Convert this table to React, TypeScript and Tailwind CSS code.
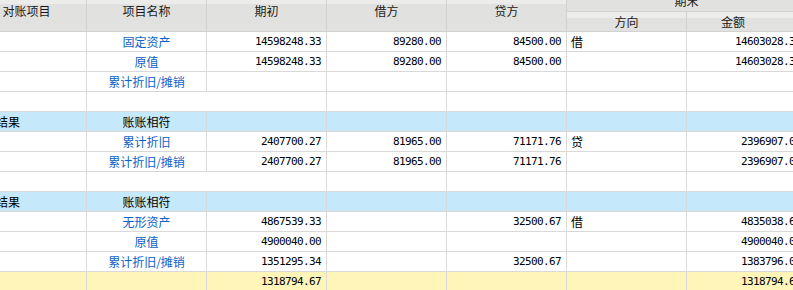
type Row =
  | { kind: 'data'; name: string; a?: string; b?: string; c?: string; dir?: string; end?: string }
  | { kind: 'empty' }
  | { kind: 'group'; label: string; note: string }
  | { kind: 'total'; a: string; end: string };

const rows: Row[] = [
  { kind: 'data', name: '固定资产', a: '14598248.33', b: '89280.00', c: '84500.00', dir: '借', end: '14603028.33' },
  { kind: 'data', name: '原值', a: '14598248.33', b: '89280.00', c: '84500.00', end: '14603028.33' },
  { kind: 'data', name: '累计折旧/摊销' },
  { kind: 'empty' },
  { kind: 'group', label: '对账结果', note: '账账相符' },
  { kind: 'data', name: '累计折旧', a: '2407700.27', b: '81965.00', c: '71171.76', dir: '贷', end: '2396907.03' },
  { kind: 'data', name: '累计折旧/摊销', a: '2407700.27', b: '81965.00', c: '71171.76', end: '2396907.03' },
  { kind: 'empty' },
  { kind: 'group', label: '对账结果', note: '账账相符' },
  { kind: 'data', name: '无形资产', a: '4867539.33', c: '32500.67', dir: '借', end: '4835038.66' },
  { kind: 'data', name: '原值', a: '4900040.00', end: '4900040.00' },
  { kind: 'data', name: '累计折旧/摊销', a: '1351295.34', c: '32500.67', end: '1383796.01' },
  { kind: 'total', a: '1318794.67', end: '1318794.67' },
];

const grid = 'grid grid-cols-[120px_120px_120px_120px_120px_120px_120px]';
const cell = 'h-[20px] border-r border-b border-[#d9d9d9] overflow-hidden whitespace-nowrap leading-[19px]';
const num = `${cell} text-right pr-[5px] font-['DejaVu_Sans_Mono',monospace] text-[11px] tracking-[-0.62px]`;
const head =
  'flex items-center justify-center border-r border-b border-[#d2d3d0] bg-[linear-gradient(#ececea_33%,#e1e2df_33%)] text-[12px] text-[#1a1a1a]';

function Num({ v }: { v?: string }) {
  return <div className={num}>{v ?? ''}</div>;
}

function BodyRow({ row }: { row: Row }) {
  if (row.kind === 'empty') {
    return (
      <div className={grid}>
        <div className={cell} />
        <div className={`${cell} col-span-2`} />
        <div className={cell} />
        <div className={cell} />
        <div className={cell} />
        <div className={cell} />
      </div>
    );
  }
  if (row.kind === 'group') {
    return (
      <div className={`${grid} bg-[#c5e8fa]`}>
        <div className={`${cell} pl-[5px]`}>{row.label}</div>
        <div className={`${cell} text-center`}>{row.note}</div>
        <div className={cell} />
        <div className={cell} />
        <div className={cell} />
        <div className={cell} />
        <div className={cell} />
      </div>
    );
  }
  if (row.kind === 'total') {
    return (
      <div className={`${grid} bg-[#fff5b8]`}>
        <div className={cell} />
        <div className={cell} />
        <Num v={row.a} />
        <div className={cell} />
        <div className={cell} />
        <div className={cell} />
        <Num v={row.end} />
      </div>
    );
  }
  return (
    <div className={grid}>
      <div className={cell} />
      <div className={`${cell} text-center text-[#0b62c8]`}>{row.name}</div>
      <Num v={row.a} />
      <Num v={row.b} />
      <Num v={row.c} />
      <div className={`${cell} pl-[4px]`}>{row.dir ?? ''}</div>
      <Num v={row.end} />
    </div>
  );
}

export default function App() {
  return (
    <div className="w-[793px] h-[290px] overflow-hidden bg-white font-['Noto_Sans_CJK_SC',sans-serif] text-[12px] text-black">
      <div className="ml-[-33px] mt-[-9px] w-[840px]">
        <div className={`${grid} grid-rows-[21px_20px]`}>
          <div className={`${head} row-span-2`}>对账项目</div>
          <div className={`${head} row-span-2`}>项目名称</div>
          <div className={`${head} row-span-2`}>期初</div>
          <div className={`${head} row-span-2`}>借方</div>
          <div className={`${head} row-span-2`}>贷方</div>
          <div className={`${head} col-span-2`}>期末</div>
          <div className={head}>方向</div>
          <div className={`${head} pr-[27px]`}>金额</div>
        </div>
        {rows.map((r, i) => (
          <BodyRow key={i} row={r} />
        ))}
      </div>
    </div>
  );
}
